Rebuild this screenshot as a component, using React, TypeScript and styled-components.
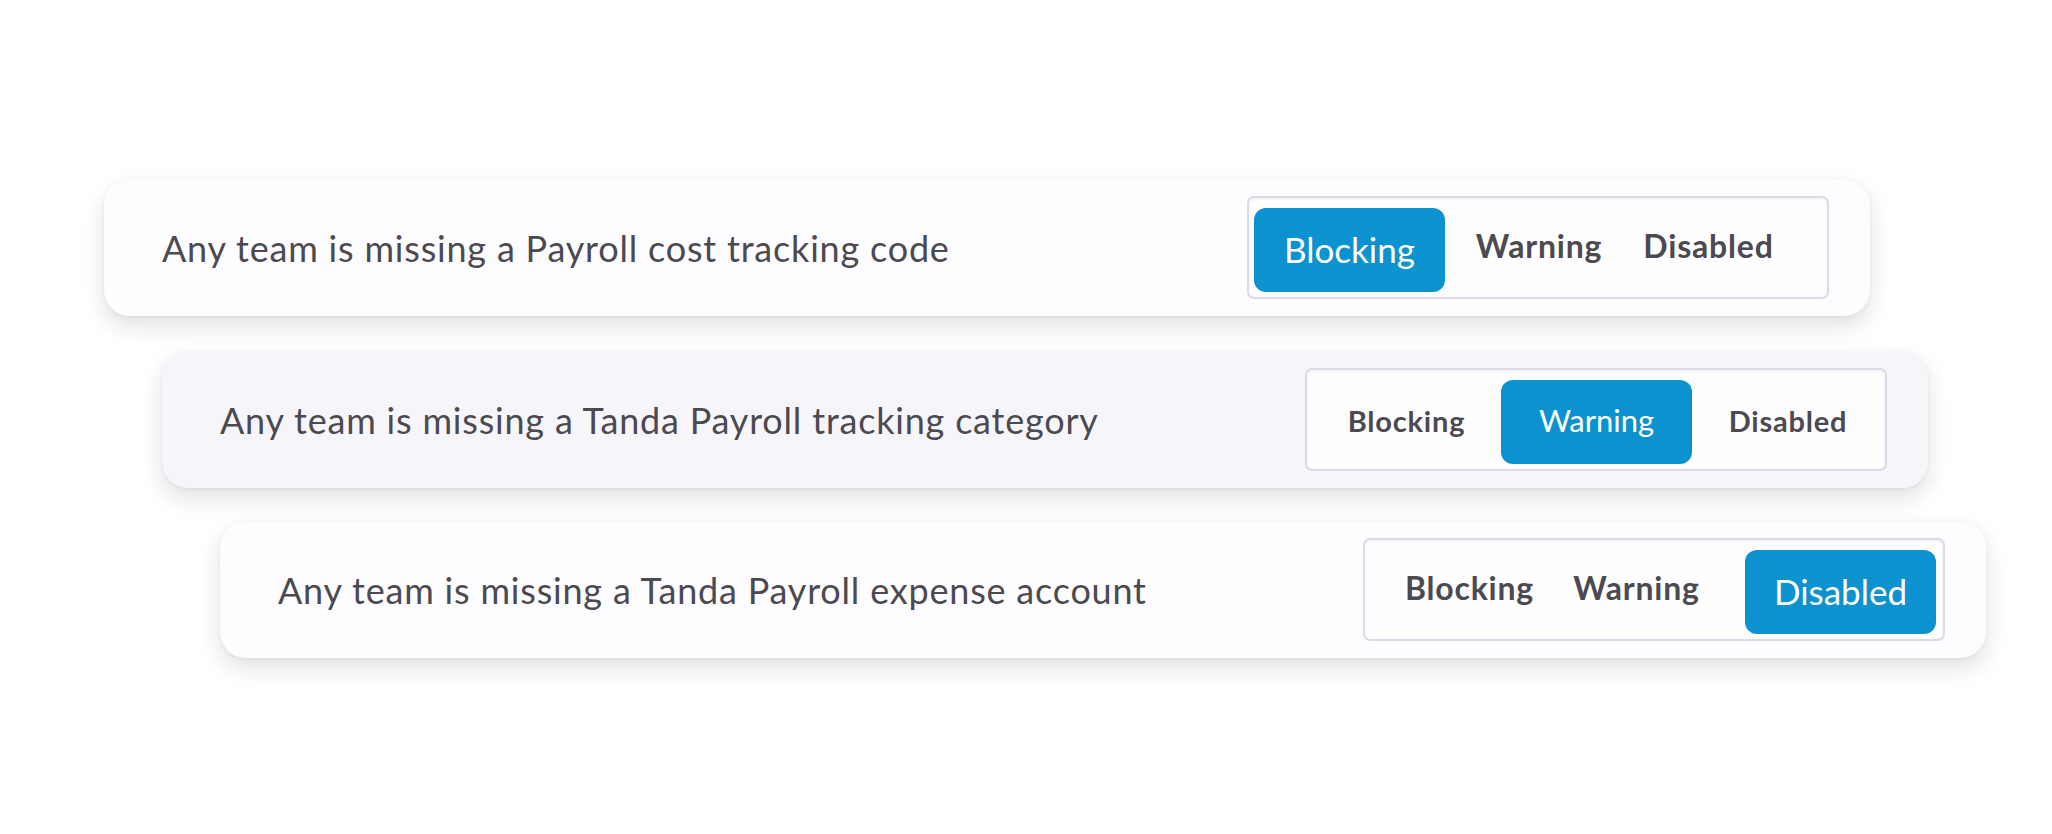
import React from "react";
import styled, { createGlobalStyle } from "styled-components";

const Global = createGlobalStyle`
  html, body { margin: 0; padding: 0; background: #ffffff; }
  body { font-family: Lato, "Noto Sans", sans-serif; }
  * { box-sizing: border-box; }
`;

const Page = styled.main`
  width: 2052px;
  height: 834px;
  padding-top: 179px;
  display: flex;
  flex-direction: column;
  background: #ffffff;
`;

const Card = styled.section<{ $indent: number; $top: number; $tint?: boolean }>`
  margin-left: ${(p) => p.$indent}px;
  margin-top: ${(p) => p.$top}px;
  width: 1766px;
  height: 137px;
  border-radius: 26px;
  background: ${(p) => (p.$tint ? "#f6f6fa" : "#fdfcfe")};
  box-shadow: 0 10px 22px rgba(20, 20, 40, 0.13), 0 1px 4px rgba(20, 20, 40, 0.05);
  display: flex;
  align-items: center;
  justify-content: space-between;
  padding: 0 41px 0 58px;
`;

const Label = styled.span`
  font-family: Lato, "Noto Sans", sans-serif;
  font-size: 36px;
  color: #4c4a50;
  letter-spacing: 0.8px;
  margin-top: 1px;
`;

const Control = styled.div`
  width: 582px;
  height: 103px;
  border: 2px solid #d9dce8;
  border-radius: 7px;
  background: #fefeff;
  box-shadow: inset 0 1px 3px rgba(120, 125, 150, 0.12);
  display: flex;
  align-items: center;
  padding: 5px 5px 0 5px;
`;

const Segment = styled.div<{ $active?: boolean; $w: number; $ml?: number; $size: number; $dy?: number }>`
  flex: none;
  width: ${(p) => p.$w}px;
  height: 84px;
  margin-left: ${(p) => p.$ml ?? 0}px;
  border-radius: 12px;
  display: flex;
  align-items: center;
  justify-content: center;
  font-family: Lato, "Noto Sans", sans-serif;
  font-size: ${(p) => p.$size}px;
  font-weight: ${(p) => (p.$active ? 400 : 700)};
  letter-spacing: ${(p) => (p.$active ? 0 : 0.8)}px;
  color: ${(p) => (p.$active ? "#ffffff" : "#4c4a50")};
  background: ${(p) => (p.$active ? "#0b92cf" : "transparent")};
  padding-bottom: ${(p) => (p.$dy ?? 0) + 2}px;
`;

type Seg = { label: string; w: number; ml?: number; size: number; dy?: number };

type Row = {
  text: string;
  indent: number;
  top: number;
  tint?: boolean;
  active: number;
  segs: Seg[];
};

const rows: Row[] = [
  {
    text: "Any team is missing a Payroll cost tracking code",
    indent: 104,
    top: 0,
    active: 0,
    segs: [
      { label: "Blocking", w: 191, size: 35 },
      { label: "Warning", w: 188, size: 32, dy: 8 },
      { label: "Disabled", w: 151, size: 32, dy: 8 },
    ],
  },
  {
    text: "Any team is missing a Tanda Payroll tracking category",
    indent: 162,
    top: 35,
    tint: true,
    active: 1,
    segs: [
      { label: "Blocking", w: 189, size: 29, dy: 2 },
      { label: "Warning", w: 191, size: 31, dy: 2 },
      { label: "Disabled", w: 192, size: 29, dy: 2 },
    ],
  },
  {
    text: "Any team is missing a Tanda Payroll expense account",
    indent: 220,
    top: 33,
    active: 2,
    segs: [
      { label: "Blocking", w: 199, size: 32, dy: 7 },
      { label: "Warning", w: 135, size: 32, dy: 7 },
      { label: "Disabled", w: 191, ml: 41, size: 35 },
    ],
  },
];

export default function App() {
  return (
    <>
      <Global />
      <Page>
        {rows.map((r) => (
          <Card key={r.text} $indent={r.indent} $top={r.top} $tint={r.tint}>
            <Label>{r.text}</Label>
            <Control>
              {r.segs.map((s, i) => (
                <Segment
                  key={s.label}
                  $active={i === r.active}
                  $w={s.w}
                  $ml={s.ml}
                  $size={s.size}
                  $dy={s.dy}
                >
                  {s.label}
                </Segment>
              ))}
            </Control>
          </Card>
        ))}
      </Page>
    </>
  );
}
